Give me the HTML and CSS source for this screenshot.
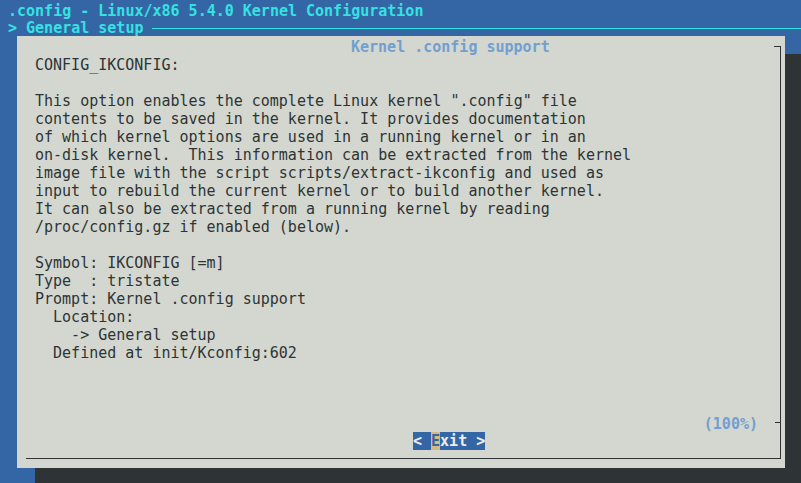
FILE: index.html
```html
<!DOCTYPE html>
<html>
<head>
<meta charset="utf-8">
<link rel="stylesheet" href="styles.css">
</head>
<body>
<div class="screen">
  <div class="backtitle">.config - Linux/x86 5.4.0 Kernel Configuration</div>
  <div class="subtitle"><span>&gt; General setup</span><span class="rule"></span></div>
  <div class="dialog">
    <div class="dtitle">Kernel .config support</div>
    <div class="frame">
<pre class="help">CONFIG_IKCONFIG:

This option enables the complete Linux kernel ".config" file
contents to be saved in the kernel. It provides documentation
of which kernel options are used in a running kernel or in an
on-disk kernel.  This information can be extracted from the kernel
image file with the script scripts/extract-ikconfig and used as
input to rebuild the current kernel or to build another kernel.
It can also be extracted from a running kernel by reading
/proc/config.gz if enabled (below).

Symbol: IKCONFIG [=m]
Type  : tristate
Prompt: Kernel .config support
  Location:
    -&gt; General setup
  Defined at init/Kconfig:602</pre>
      <div class="sep"><span class="pct">(100%)</span></div>
      <div class="buttons"><span class="btn">&lt; <span class="key">E</span>xit &gt;</span></div>
    </div>
  </div>
</div>
</body>
</html>
```
FILE: styles.css
```css
html, body {
  margin: 0;
  padding: 0;
  background: #3465a4;
}
.screen {
  width: 801px;
  height: 483px;
  overflow: hidden;
  background: #3465a4;
  font-family: "DejaVu Sans Mono", "Liberation Mono", monospace;
  font-size: 15px;
  line-height: 18px;
}
.backtitle {
  height: 16px;
  padding: 2px 0 0 8px;
  color: #34e2e2;
  font-weight: bold;
  white-space: pre;
}
.subtitle {
  height: 16px;
  padding: 2px 0 0 8px;
  display: flex;
  align-items: center;
  color: #34e2e2;
  font-weight: bold;
  white-space: pre;
}
.rule {
  flex: 1;
  margin-left: 9px;
  border-top: 1px solid #34e2e2;
}
.dialog {
  margin-left: 17px;
  width: 768px;
  height: 432px;
  background: #d3d7cf;
  box-shadow: 18px 18px 0 #2e3436;
  display: flex;
  flex-direction: column;
}
.dtitle {
  height: 16px;
  padding: 2px 0 0 334px;
  color: #729fcf;
  font-weight: bold;
  white-space: pre;
  position: relative;
  z-index: 1;
}
.frame {
  flex: 1;
  margin: -8px 4px 9px 9px;
  padding: 8px 0 8px 9px;
  border-right: 1px solid #2e3436;
  border-bottom: 1px solid #2e3436;
  background: linear-gradient(#2e3436, #2e3436) top right / 6px 1px no-repeat;
  display: flex;
  flex-direction: column;
}
.help {
  margin: 0;
  padding-top: 2px;
  font: inherit;
  color: #2e3436;
  white-space: pre;
}
.sep {
  margin-top: auto;
  height: 17px;
  padding: 1px 22px 0 0;
  display: flex;
  justify-content: flex-end;
  background: linear-gradient(#2e3436, #2e3436) right 0 top 8px / 5px 1px no-repeat;
}
.pct {
  color: #729fcf;
  font-weight: bold;
}
.buttons {
  height: 18px;
  padding-left: 378px;
  display: flex;
}
.btn {
  background: #3465a4;
  color: #eeeeec;
  font-weight: bold;
  white-space: pre;
}
.key {
  background: #d5bb80;
  color: #3465a4;
}
```
